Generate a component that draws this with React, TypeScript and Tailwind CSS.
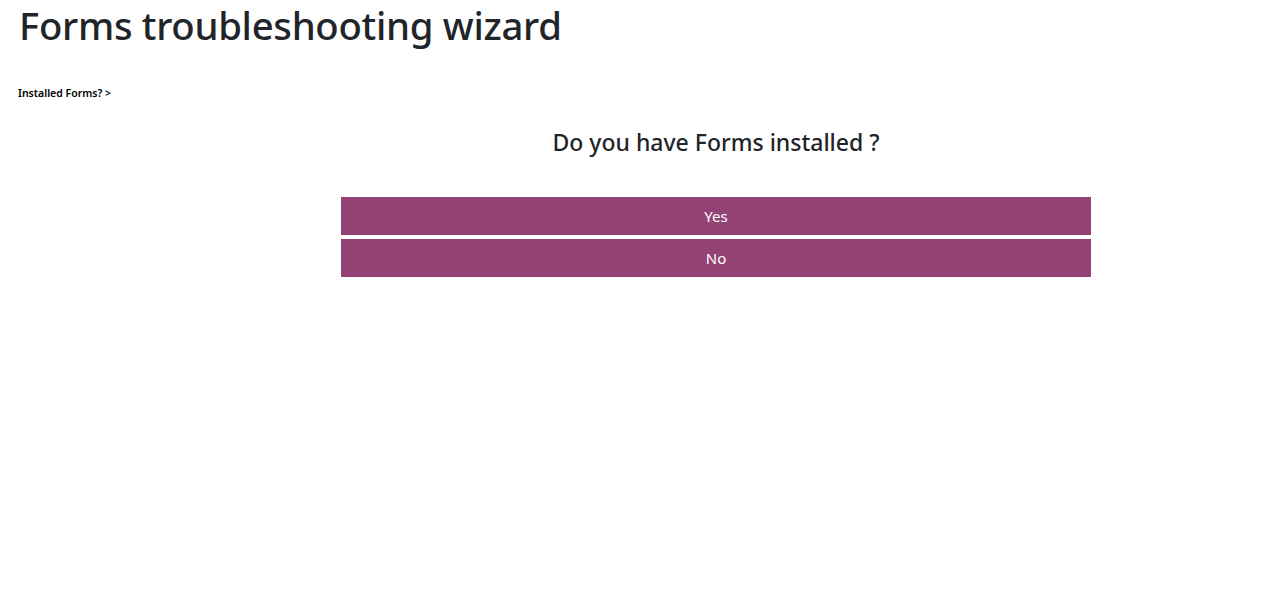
export default function App() {
  return (
    <div className="min-h-[611px] bg-white text-[#212529]" style={{ fontFamily: '"Noto Sans", "Open Sans", sans-serif' }}>
      <h1 className="pl-[19px] pt-[1px] text-[38.3px] leading-[48px] font-medium tracking-[-0.3px] text-[#212529]">
        Forms troubleshooting wizard
      </h1>
      <div className="pl-[18px] pt-[37px] text-[10.5px] leading-[14px] font-semibold text-black">
        Installed Forms? &gt;
      </div>
      <div className="flex pt-[27px]">
        <div className="w-[341px] shrink-0" />
        <div className="w-[750px] shrink-0">
          <h2 className="text-center text-[23px] leading-[30px] font-medium text-[#212529]">
            Do you have Forms installed ?
          </h2>
          <div className="mt-[40px] flex flex-col gap-[4px]">
            <button className="h-[38px] w-full bg-[#934274] text-[15px] text-white">Yes</button>
            <button className="h-[38px] w-full bg-[#934274] text-[15px] text-white">No</button>
          </div>
        </div>
      </div>
    </div>
  );
}
